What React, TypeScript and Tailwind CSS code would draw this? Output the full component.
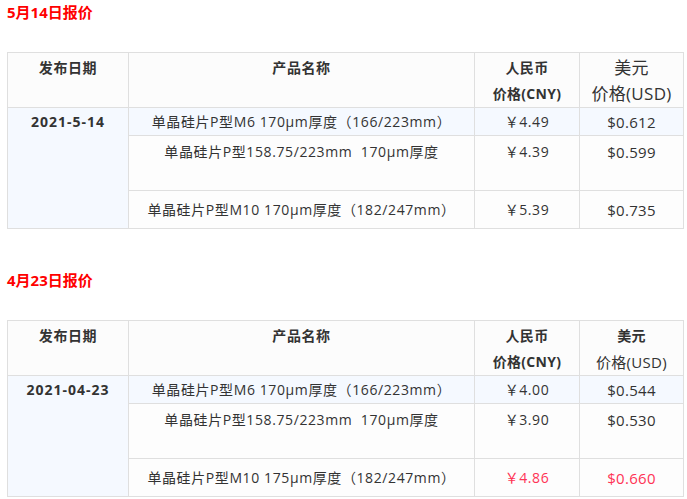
const font = { fontFamily: '"Open Sans", "Noto Sans CJK SC", sans-serif' };

type Row = { name: string; cny: string; usd: string; red?: boolean };

const sections: { title: string; date: string; bigUsd: boolean; rows: Row[] }[] = [
  {
    title: "5月14日报价",
    date: "2021-5-14",
    bigUsd: true,
    rows: [
      { name: "单晶硅片P型M6 170μm厚度（166/223mm）", cny: "￥4.49", usd: "$0.612" },
      { name: "单晶硅片P型158.75/223mm  170μm厚度", cny: "￥4.39", usd: "$0.599" },
      { name: "单晶硅片P型M10 170μm厚度（182/247mm）", cny: "￥5.39", usd: "$0.735" },
    ],
  },
  {
    title: "4月23日报价",
    date: "2021-04-23",
    bigUsd: false,
    rows: [
      { name: "单晶硅片P型M6 170μm厚度（166/223mm）", cny: "￥4.00", usd: "$0.544" },
      { name: "单晶硅片P型158.75/223mm  170μm厚度", cny: "￥3.90", usd: "$0.530" },
      { name: "单晶硅片P型M10 175μm厚度（182/247mm）", cny: "￥4.86", usd: "$0.660", red: true },
    ],
  },
];

const cell = "border border-[#dfdfdf] text-center leading-[26px]";

function PriceTable({ s }: { s: (typeof sections)[number] }) {
  const rowStyle = [
    "h-[28px] align-top pt-px bg-[#f5f9ff]",
    "h-[55px] align-top pt-[3px] bg-[#fdfdfd]",
    "h-[38px] align-middle bg-[#fdfdfd]",
  ];
  return (
    <table className="w-[676px] table-fixed border-collapse text-[14px] tracking-[0.6px] text-[#333]">
      <colgroup>
        <col className="w-[121px]" />
        <col className="w-[346px]" />
        <col className="w-[105px]" />
        <col className="w-[104px]" />
      </colgroup>
      <thead>
        <tr className="h-[54px] bg-[#fcfcfc]">
          <th className={`${cell} align-top pt-[2px] font-bold`}>发布日期</th>
          <th className={`${cell} align-top pt-[2px] font-bold`}>产品名称</th>
          <th className={`${cell} align-top pt-[2px] font-bold tracking-[0.3px]`}>
            <div>人民币</div>
            <div>价格(CNY)</div>
          </th>
          {s.bigUsd ? (
            <th className={`${cell} align-top pt-[2px] font-normal text-[17px] tracking-[0.3px]`}>
              <div>美元</div>
              <div>价格(USD)</div>
            </th>
          ) : (
            <th className={`${cell} align-top pt-[2px] font-normal tracking-[0.3px]`}>
              <div className="font-bold">美元</div>
              <div className="text-[15px]">价格(USD)</div>
            </th>
          )}
        </tr>
      </thead>
      <tbody>
        {s.rows.map((r, i) => (
          <tr key={i}>
            {i === 0 && (
              <td rowSpan={3} className={`${cell} align-top pt-px font-bold tracking-[1px] bg-[#f5f9ff]`}>
                {s.date}
              </td>
            )}
            <td className={`${cell} ${rowStyle[i]} whitespace-pre`}>{r.name}</td>
            <td className={`${cell} ${rowStyle[i]} ${r.red ? "text-[#ff3355]" : ""}`}>{r.cny}</td>
            <td className={`${cell} ${rowStyle[i]} text-[15px] tracking-[0.3px] ${r.red ? "text-[#ff3355]" : ""}`}>{r.usd}</td>
          </tr>
        ))}
      </tbody>
    </table>
  );
}

export default function App() {
  return (
    <div className="min-h-screen bg-white px-[7px]" style={font}>
      {sections.map((s, i) => (
        <div key={i} className={i === 0 ? "" : "mt-[39px]"}>
          <div className="text-[15px] font-bold leading-[24px] text-[#ff0000]">{s.title}</div>
          <div className="mt-[28px]">
            <PriceTable s={s} />
          </div>
        </div>
      ))}
    </div>
  );
}
